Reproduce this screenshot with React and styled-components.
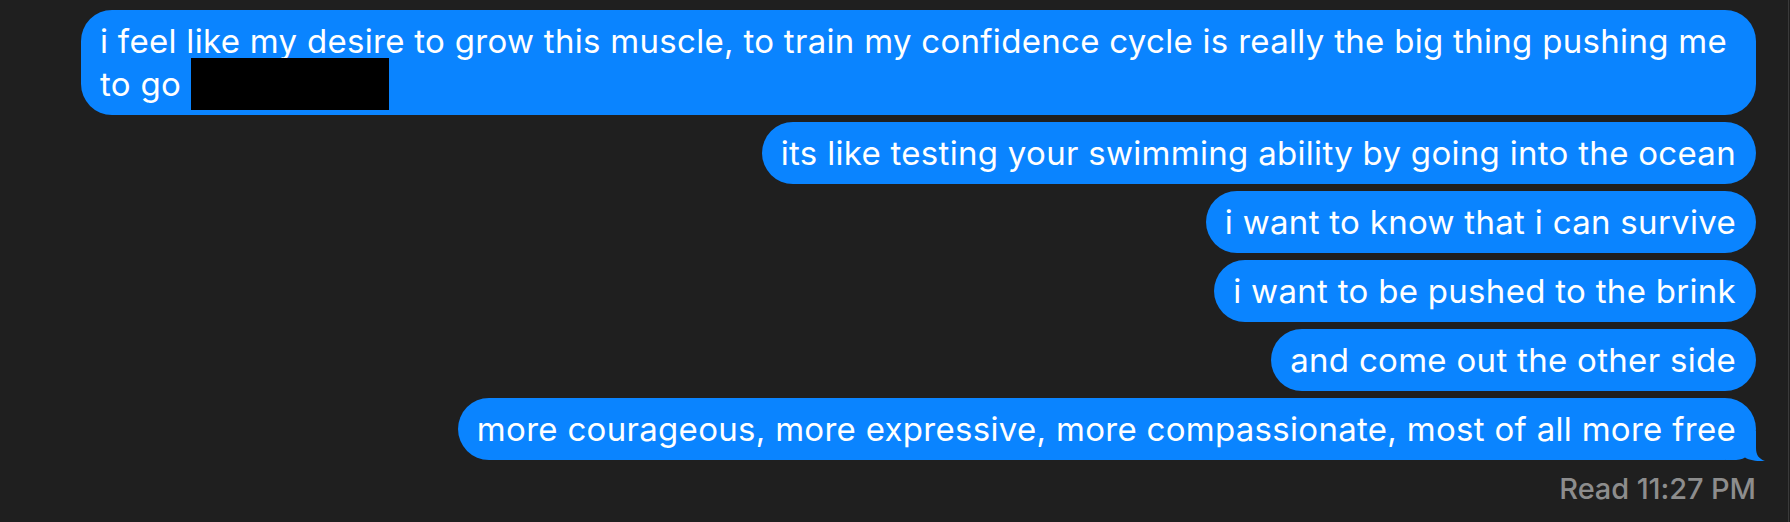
import React from "react";
import styled, { createGlobalStyle } from "styled-components";

const Global = createGlobalStyle`
  html, body {
    margin: 0;
    padding: 0;
    background: #1f1f1f;
  }
  body {
    font-family: Inter, "Noto Sans", "Liberation Sans", sans-serif;
    -webkit-font-smoothing: antialiased;
  }
`;

const Page = styled.div`
  box-sizing: border-box;
  width: 1789px;
  height: 522px;
  background: #1f1f1f;
  border-right: 1px solid #3a3a3a;
  padding: 10px 32px 0 81px;
  display: flex;
  flex-direction: column;
  align-items: flex-end;
  gap: 7px;
  overflow: hidden;
`;

const Bubble = styled.div`
  position: relative;
  box-sizing: border-box;
  max-width: 100%;
  background: #0a84ff;
  color: #ffffff;
  font-size: 33px;
  line-height: 43px;
  letter-spacing: 0.3px;
  padding: 9.5px 20px 9.5px 19px;
  border-radius: 31px;
`;

const Text = styled.span`
  position: relative;
  z-index: 1;
`;

const Redacted = styled.span`
  display: inline-block;
  width: 198px;
  height: 52px;
  margin: -14px 0;
  vertical-align: -0px;
  background: #000000;
`;

const Tail = styled.svg`
  position: absolute;
  z-index: 0;
  right: -10px;
  bottom: -1px;
  width: 40px;
  height: 30px;
  overflow: visible;
`;

const Receipt = styled.div`
  margin-top: 4px;
  font-size: 29px;
  line-height: 36px;
  font-weight: 500;
  color: #8d8d8d;
  letter-spacing: -0.1px;
`;

const messages = [
  "its like testing your swimming ability by going into the ocean",
  "i want to know that i can survive",
  "i want to be pushed to the brink",
  "and come out the other side",
];

export default function App() {
  return (
    <>
      <Global />
      <Page>
        <Bubble>
          i feel like my desire to grow this muscle, to train my confidence
          cycle is really the big thing pushing me to go{" "}
          <Redacted />
        </Bubble>
        {messages.map((m) => (
          <Bubble key={m}>{m}</Bubble>
        ))}
        <Bubble>
          <Tail viewBox="0 0 40 30">
            <path
              d="M0 29 L0 0 L30 0 L30 17 C30 24 33 28 39 30 C33 30.5 24 29.5 19 26.5 C16 28.5 12 29 6 29 Z"
              fill="#0a84ff"
            />
          </Tail>
          <Text>
            more courageous, more expressive, more compassionate, most of all
            more free
          </Text>
        </Bubble>
        <Receipt>Read 11:27 PM</Receipt>
      </Page>
    </>
  );
}
